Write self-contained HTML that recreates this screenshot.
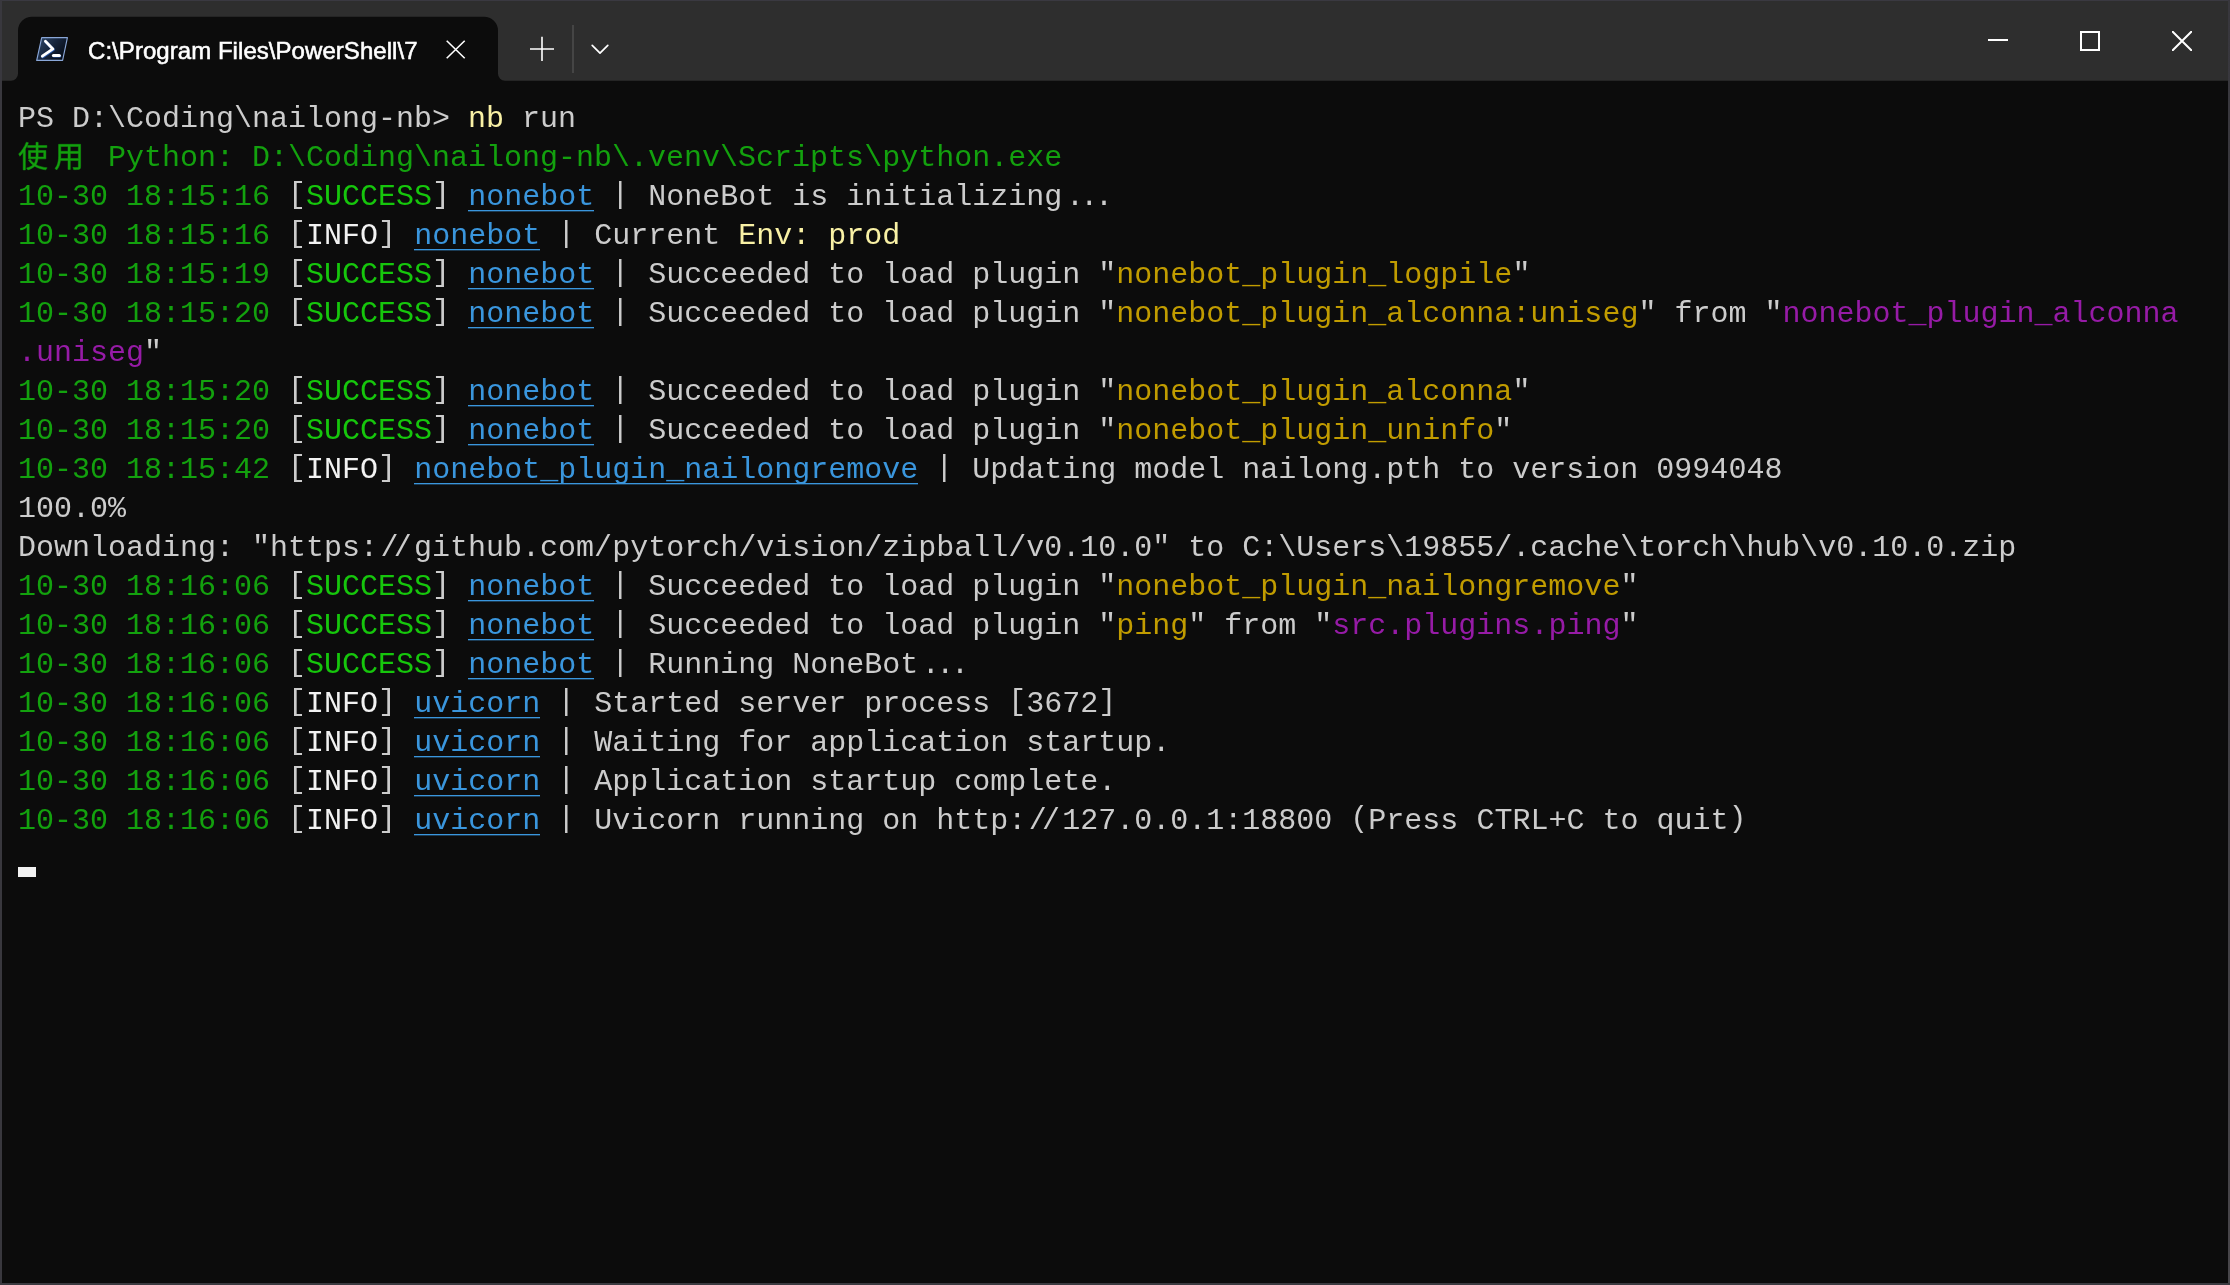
<!DOCTYPE html>
<html>
<head>
<meta charset="utf-8">
<title>PowerShell</title>
<style>
html,body{margin:0;padding:0;}
body{width:2230px;height:1285px;overflow:hidden;background:#0c0c0c;position:relative;font-family:"Liberation Sans",sans-serif;}
#win{position:absolute;left:0;top:0;width:2230px;height:1285px;background:#0c0c0c;overflow:hidden;}
#tabtitle{position:absolute;left:88px;top:36px;font-size:24px;line-height:30px;color:#ffffff;white-space:pre;letter-spacing:0.05px;-webkit-text-stroke:0.55px #ffffff;will-change:transform;}
.bl{position:absolute;}
#term{position:absolute;left:18px;top:100px;font-family:"Liberation Mono",monospace;font-size:30px;line-height:39px;color:#cccccc;will-change:transform;}
#term div{height:39px;white-space:pre;}
.g{color:#13a10e;}
.G{color:#16c60c;}
.c{color:#3a96dd;position:relative;display:inline-block;height:39px;}
.c:after{content:"";position:absolute;left:0;right:0;top:32px;height:2px;background:linear-gradient(#3a96dd 50%,rgba(58,150,221,0.35) 50%);}
.y{color:#c19c00;}
.Y{color:#f9f1a5;}
.p{color:#961ba6;}
.W{color:#f2f2f2;}
.k{position:relative;top:-2px;}
.b{position:relative;top:-2.5px;left:-1px;}
.r{position:relative;left:2.5px;}
.l{position:relative;left:-2.4px;}
.r3{position:relative;left:3.6px;}
.l3{position:relative;left:-3.4px;}
#cursor{position:absolute;left:18px;top:867px;width:18px;height:10px;background:#f2f2f2;}
</style>
</head>
<body>
<div id="win">
<svg class="bl" style="left:0;top:0" width="2230" height="82" viewBox="0 0 2230 82"><path d="M0 0H2230V80.7H505A7 7 0 0 1 498 73.7V30.7A14 14 0 0 0 484 16.7H32A14 14 0 0 0 18 30.7V73.7A7 7 0 0 1 11 80.7H0Z" fill="#2e2e2e"/></svg>
<div id="tabtitle">C:\Program Files\PowerShell\7</div>
<div id="term">
<div>PS D:\Coding\nailong-nb&gt; <span class="Y">nb</span> run</div>
<div class="g"><span style="display:inline-block;width:72px"></span> Python: D:\Coding\nailong-nb\.venv\Scripts\python.exe</div>
<div><span class="g">10-30 18:15:16</span> <span class="k">[</span><span class="G">SUCCESS</span><span class="k">]</span> <span class="c">nonebot</span> <span class="b">|</span> NoneBot is initializing<span class="r3">.</span>.<span class="l3">.</span></div>
<div><span class="g">10-30 18:15:16</span> <span class="k">[</span><span class="W">INFO</span><span class="k">]</span> <span class="c">nonebot</span> <span class="b">|</span> Current <span class="Y">Env: prod</span></div>
<div><span class="g">10-30 18:15:19</span> <span class="k">[</span><span class="G">SUCCESS</span><span class="k">]</span> <span class="c">nonebot</span> <span class="b">|</span> Succeeded to load plugin "<span class="y">nonebot_plugin_logpile</span>"</div>
<div><span class="g">10-30 18:15:20</span> <span class="k">[</span><span class="G">SUCCESS</span><span class="k">]</span> <span class="c">nonebot</span> <span class="b">|</span> Succeeded to load plugin "<span class="y">nonebot_plugin_alconna:uniseg</span>" from "<span class="p">nonebot_plugin_alconna</span></div>
<div><span class="p">.uniseg</span>"</div>
<div><span class="g">10-30 18:15:20</span> <span class="k">[</span><span class="G">SUCCESS</span><span class="k">]</span> <span class="c">nonebot</span> <span class="b">|</span> Succeeded to load plugin "<span class="y">nonebot_plugin_alconna</span>"</div>
<div><span class="g">10-30 18:15:20</span> <span class="k">[</span><span class="G">SUCCESS</span><span class="k">]</span> <span class="c">nonebot</span> <span class="b">|</span> Succeeded to load plugin "<span class="y">nonebot_plugin_uninfo</span>"</div>
<div><span class="g">10-30 18:15:42</span> <span class="k">[</span><span class="W">INFO</span><span class="k">]</span> <span class="c">nonebot_plugin_nailongremove</span> <span class="b">|</span> Updating model nailong.pth to version 0994048</div>
<div>100.0%</div>
<div>Downloading: "https:<span class="r">/</span><span class="l">/</span>github.com/pytorch/vision/zipball/v0.10.0" to C:\Users\19855/.cache\torch\hub\v0.10.0.zip</div>
<div><span class="g">10-30 18:16:06</span> <span class="k">[</span><span class="G">SUCCESS</span><span class="k">]</span> <span class="c">nonebot</span> <span class="b">|</span> Succeeded to load plugin "<span class="y">nonebot_plugin_nailongremove</span>"</div>
<div><span class="g">10-30 18:16:06</span> <span class="k">[</span><span class="G">SUCCESS</span><span class="k">]</span> <span class="c">nonebot</span> <span class="b">|</span> Succeeded to load plugin "<span class="y">ping</span>" from "<span class="p">src.plugins.ping</span>"</div>
<div><span class="g">10-30 18:16:06</span> <span class="k">[</span><span class="G">SUCCESS</span><span class="k">]</span> <span class="c">nonebot</span> <span class="b">|</span> Running NoneBot<span class="r3">.</span>.<span class="l3">.</span></div>
<div><span class="g">10-30 18:16:06</span> <span class="k">[</span><span class="W">INFO</span><span class="k">]</span> <span class="c">uvicorn</span> <span class="b">|</span> Started server process <span class="k">[</span>3672<span class="k">]</span></div>
<div><span class="g">10-30 18:16:06</span> <span class="k">[</span><span class="W">INFO</span><span class="k">]</span> <span class="c">uvicorn</span> <span class="b">|</span> Waiting for application startup.</div>
<div><span class="g">10-30 18:16:06</span> <span class="k">[</span><span class="W">INFO</span><span class="k">]</span> <span class="c">uvicorn</span> <span class="b">|</span> Application startup complete.</div>
<div><span class="g">10-30 18:16:06</span> <span class="k">[</span><span class="W">INFO</span><span class="k">]</span> <span class="c">uvicorn</span> <span class="b">|</span> Uvicorn running on http:<span class="r">/</span><span class="l">/</span>127.0.0.1:18800 <span class="k">(</span>Press CTRL+C to quit<span class="k">)</span></div>
</div>
<svg class="bl" style="left:17.7px;top:140.8px" width="66" height="30" viewBox="0 0 2200 1000"><g fill="#13a10e" stroke="#13a10e" stroke-width="16"><path d="M599 44V151H321V220H599V318H350V595H594C587 650 572 702 540 749C487 712 444 667 413 615L350 636C387 700 436 754 495 799C449 841 381 876 284 901C300 917 321 946 330 963C434 932 506 890 557 841C658 902 784 942 927 962C937 940 956 911 972 894C828 878 702 843 601 788C641 729 659 664 667 595H929V318H672V220H962V151H672V44ZM420 381H599V486L598 531H420ZM672 381H857V531H671L672 486ZM278 38C219 190 122 338 21 434C34 452 55 491 63 508C101 470 138 426 173 377V964H245V268C284 201 320 131 348 60Z"/><path transform="translate(1200 0)" d="M153 110V473C153 614 143 791 32 916C49 925 79 950 90 965C167 880 201 765 216 653H467V951H543V653H813V858C813 876 806 882 786 883C767 884 699 885 629 882C639 902 651 935 655 954C749 955 807 954 841 942C875 930 887 907 887 858V110ZM227 182H467V343H227ZM813 182V343H543V182ZM227 414H467V582H223C226 544 227 507 227 473ZM813 414V582H543V414Z"/></g></svg>

<!-- PowerShell icon -->
<svg class="bl" style="left:34px;top:35px" width="38" height="28" viewBox="34 35 38 28">
<defs><linearGradient id="psg" x1="0" y1="0.2" x2="1" y2="0.8"><stop offset="0" stop-color="#2c4464"/><stop offset="0.45" stop-color="#16253d"/><stop offset="1" stop-color="#04080f"/></linearGradient></defs>
<path d="M41.7 37.6H67.4L62.6 60.4H36.7Z" fill="url(#psg)" stroke="#8aa7d8" stroke-width="1.15" stroke-linejoin="round"/>
<path d="M45.9 41.9L53.5 49.5L42.9 56.9M53.9 56.2H59.9" fill="none" stroke="#2c5cab" stroke-width="2.8" stroke-linecap="round" stroke-linejoin="round"/>
<path d="M45.4 41.3L52.9 48.9L42.3 56.2" fill="none" stroke="#ffffff" stroke-width="2.8" stroke-linecap="round" stroke-linejoin="round"/>
<path d="M53.4 55.6H59.3" fill="none" stroke="#ffffff" stroke-width="3" stroke-linecap="round"/>
</svg>
<!-- tab close -->
<svg class="bl" style="left:440px;top:34px" width="32" height="32" viewBox="440 34 32 32"><path d="M446.7 40.7L464.7 58.2M464.7 40.7L446.7 58.2" fill="none" stroke="#ffffff" stroke-width="1.6"/></svg>
<!-- new tab plus -->
<svg class="bl" style="left:524px;top:30px" width="36" height="38" viewBox="524 30 36 38"><path d="M530 49H554M542 36.8V61" fill="none" stroke="#ffffff" stroke-width="1.6"/></svg>
<div class="bl" style="left:572px;top:25px;width:1.5px;height:48px;background:#454545"></div>
<!-- dropdown chevron -->
<svg class="bl" style="left:586px;top:40px" width="28" height="20" viewBox="586 40 28 20"><path d="M592.2 45.4L600 53.2L607.8 45.4" fill="none" stroke="#ffffff" stroke-width="1.7" stroke-linecap="round" stroke-linejoin="round"/></svg>
<!-- window controls -->
<div class="bl" style="left:1988px;top:39px;width:20px;height:2px;background:#ffffff"></div>
<div class="bl" style="left:2080px;top:31px;width:16px;height:16px;border:2px solid #ffffff"></div>
<svg class="bl" style="left:2172px;top:31px" width="20" height="20" viewBox="0 0 20 20"><path d="M-1 -1L21 21M21 -1L-1 21" fill="none" stroke="#ffffff" stroke-width="2"/></svg>
<!-- borders -->
<div class="bl" style="left:0;top:0;width:2230px;height:1px;background:#3a3941"></div>
<div class="bl" style="left:0;top:0;width:2px;height:1285px;background:#39383e"></div>
<div class="bl" style="left:2228px;top:0;width:2px;height:1285px;background:linear-gradient(#38373d,#3e3d42 50%,#48464a)"></div>
<div class="bl" style="left:0;top:1283px;width:2230px;height:2px;background:#3b3a40"></div>
<div id="cursor"></div>
</div>
</body>
</html>
